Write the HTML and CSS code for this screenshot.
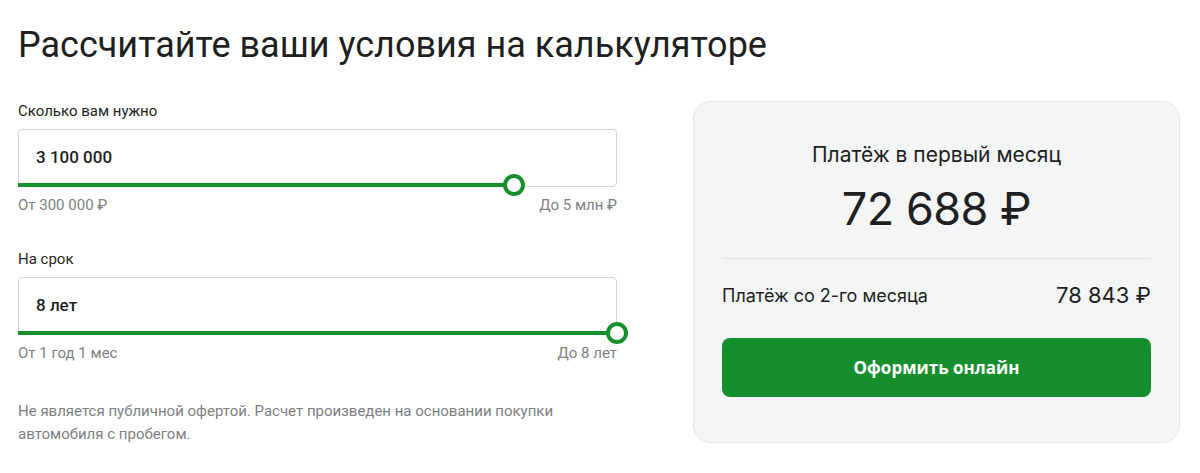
FILE: index.html
```html
<!DOCTYPE html>
<html>
<head>
  <meta charset="utf-8">
  <title>Калькулятор автокредита</title>
  <link rel="stylesheet" href="styles.css">
</head>
<body>
  <div class="page">
    <h1 class="title">Рассчитайте ваши условия на калькуляторе</h1>

    <div class="calc">
      <div class="form">
        <div class="field">
          <div class="field-label">Сколько вам нужно</div>
          <div class="field-box">
            <span class="field-value">3 100 000</span>
            <div class="track">
              <div class="track-fill" style="width: 82.8%"></div>
              <div class="thumb" style="left: 82.8%"></div>
            </div>
          </div>
          <div class="field-range">
            <span>От 300 000 ₽</span>
            <span>До 5 млн ₽</span>
          </div>
        </div>

        <div class="field">
          <div class="field-label">На срок</div>
          <div class="field-box">
            <span class="field-value">8 лет</span>
            <div class="track">
              <div class="track-fill" style="width: 100%"></div>
              <div class="thumb" style="left: 100%"></div>
            </div>
          </div>
          <div class="field-range">
            <span>От 1 год 1 мес</span>
            <span>До 8 лет</span>
          </div>
        </div>

        <p class="note">Не является публичной офертой. Расчет произведен на основании покупки автомобиля с пробегом.</p>
      </div>

      <div class="result">
        <div class="result-caption">Платёж в первый месяц</div>
        <div class="result-sum">72 688 ₽</div>
        <div class="result-row">
          <span class="result-row-label">Платёж со 2-го месяца</span>
          <span class="result-row-sum">78 843 ₽</span>
        </div>
        <button class="apply-button">Оформить онлайн</button>
      </div>
    </div>
  </div>
</body>
</html>
```

FILE: styles.css
```css
body {
  margin: 0;
  background: #fff;
  font-family: "Roboto", "Noto Sans", sans-serif;
  color: #1f1f22;
}
.page {
  padding: 22px 20px 0 18px;
}
.title {
  margin: 0;
  font-size: 36px;
  font-weight: 400;
  line-height: 46px;
}
.calc {
  display: flex;
  align-items: flex-start;
  margin-top: 33px;
}
.form {
  width: 599px;
}
.field {
  margin-bottom: 34px;
}
.field-label {
  font-size: 15px;
  line-height: 20px;
  margin-bottom: 8px;
}
.field-box {
  position: relative;
  height: 56px;
  border: 1px solid #d3d4d6;
  border-radius: 4px;
  display: flex;
  align-items: center;
  padding: 0 17px;
}
.field-value {
  font-size: 17px;
  font-weight: 500;
  margin-top: -2px;
}
.track {
  position: absolute;
  left: -1px;
  right: -1px;
  bottom: -1px;
  height: 4px;
}
.track-fill {
  height: 100%;
  background: #13902c;
}
.thumb {
  position: absolute;
  top: 50%;
  width: 14px;
  height: 14px;
  margin: -11px 0 0 -11px;
  border: 4px solid #13902c;
  border-radius: 50%;
  background: #fff;
}
.field-range {
  display: flex;
  justify-content: space-between;
  font-size: 15px;
  color: #7d7f83;
  line-height: 20px;
  margin-top: 8px;
}
.note {
  margin: 37px 0 0;
  font-size: 15px;
  line-height: 23px;
  color: #7d7f83;
  width: 590px;
}
.result {
  margin-left: 76px;
  width: 429px;
  background: #f4f5f7;
  border: 1px solid #e6e7ea;
  border-radius: 18px;
  padding: 38px 28px 45px;
  display: flex;
  flex-direction: column;
  font-family: "Inter", "Noto Sans", sans-serif;
}
.result-caption {
  text-align: center;
  font-size: 21px;
  line-height: 30px;
}
.result-sum {
  text-align: center;
  font-size: 45px;
  line-height: 56px;
  margin-top: 11px;
  letter-spacing: -0.5px;
}
.result-row {
  display: flex;
  justify-content: space-between;
  align-items: center;
  border-top: 1px solid #e1e2e5;
  margin-top: 21px;
  padding-top: 23px;
}
.result-row-label {
  font-size: 18px;
}
.result-row-sum {
  font-size: 22px;
}
.apply-button {
  margin-top: 30px;
  height: 59px;
  border: none;
  border-radius: 8px;
  background: #158f2e;
  color: #fff;
  font-family: "Open Sans", "Noto Sans", sans-serif;
  font-size: 17px;
  font-weight: 700;
  cursor: pointer;
}
```
